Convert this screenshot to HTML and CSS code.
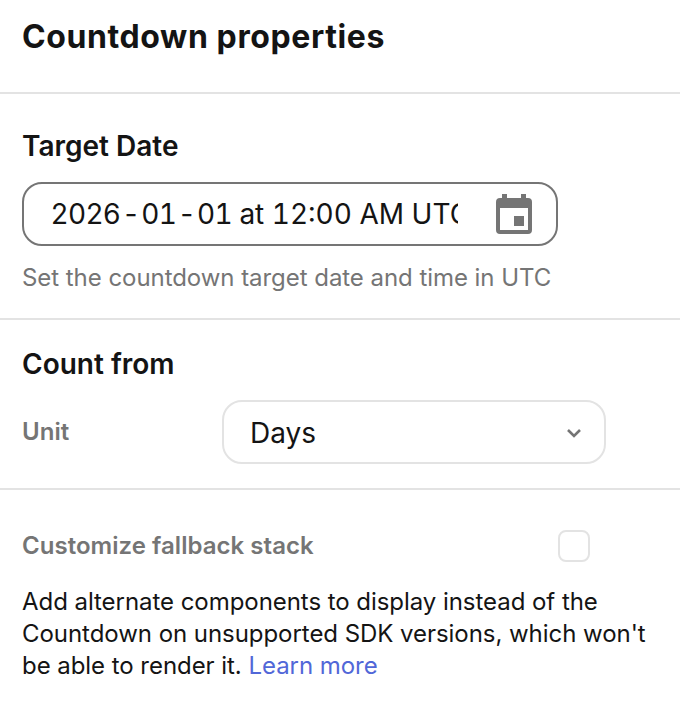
FILE: index.html
```html
<!DOCTYPE html>
<html lang="en">
<head>
<meta charset="utf-8">
<title>Countdown properties</title>
<link rel="stylesheet" href="styles.css">
</head>
<body>
<main class="panel">
  <header class="section header"><h1>Countdown properties</h1></header>
  <section class="section target">
    <h2>Target Date</h2>
    <div class="date-field">
      <span class="date-value"><span class="date-part">2026<span class="hy">-</span>01<span class="hy">-</span>01</span> at 12:00 AM UTC</span>
      <svg class="cal" viewBox="0 0 36 40" aria-hidden="true"><path fill="#757575" fill-rule="evenodd" d="M6 0h5v4h14V0h5v4h2a4 4 0 0 1 4 4v28a4 4 0 0 1-4 4H4a4 4 0 0 1-4-4V8a4 4 0 0 1 4-4h2zM4 14v22h28V14z"/><rect x="18" y="22" width="10" height="10" fill="#757575"/></svg>
    </div>
    <p class="hint">Set the countdown target date and time in UTC</p>
  </section>
  <section class="section count">
    <h2>Count from</h2>
    <div class="unit-row">
      <span class="label">Unit</span>
      <div class="select">
        <span>Days</span>
        <svg class="chev" viewBox="0 0 16 10" aria-hidden="true"><path d="M2 2l6 6 6-6" fill="none" stroke="#757575" stroke-width="2.6"/></svg>
      </div>
    </div>
  </section>
  <section class="section fallback">
    <div class="fallback-row">
      <span class="label">Customize fallback stack</span>
      <span class="checkbox"></span>
    </div>
    <p class="desc">Add alternate components to display instead of the Countdown on unsupported SDK versions, which won't be able to render it. <a href="#">Learn more</a></p>
  </section>
</main>
</body>
</html>
```
FILE: styles.css
```css
* { box-sizing: border-box; }
html, body { margin: 0; background: #fff; }
body { font-family: Inter, "Liberation Sans", sans-serif; color: #141414; }
.panel { width: 680px; height: 708px; overflow: hidden; }
.section { padding: 0 22px; border-bottom: 2px solid #e3e3e3; }
.header { height: 94px; padding-top: 18px; }
h1 { margin: 0; font-size: 32px; line-height: 38px; font-weight: 700; letter-spacing: 0.6px; }
h2 { margin: 0; font-size: 28px; line-height: 36px; font-weight: 600; }
.target { height: 226px; padding-top: 34px; }
.date-field { margin-top: 18px; width: 536px; height: 64px; border: 2px solid #757575; border-radius: 20px; display: flex; align-items: center; justify-content: space-between; padding: 0 24px 0 26.5px; }
.date-value { width: 407.5px; overflow: hidden; white-space: nowrap; font-size: 28px; line-height: 36px; font-variant-numeric: tabular-nums; }
.date-part { letter-spacing: -0.7px; }
.hy { margin: 0 1.7px; }
.cal { width: 36px; height: 40px; }
.hint { margin: 16px 0 0; font-size: 24px; line-height: 32px; letter-spacing: -0.05px; color: #757575; }
.count { height: 170px; padding-top: 26px; }
.unit-row { margin-top: 18px; display: flex; align-items: center; }
.label { font-size: 24px; line-height: 32px; font-weight: 600; letter-spacing: 0.04px; color: #757575; }
.unit-row .label { width: 200px; }
.select { width: 384px; height: 64px; border: 2px solid #e3e3e3; border-radius: 20px; display: flex; align-items: center; justify-content: space-between; padding: 1px 22px 0 26px; font-size: 28px; line-height: 36px; }
.chev { width: 16px; height: 10px; }
.fallback { border-bottom: 0; padding-top: 40px; }
.fallback-row { display: flex; align-items: center; justify-content: space-between; padding-right: 68px; height: 32px; }
.checkbox { width: 32px; height: 32px; border: 2px solid #e3e3e3; border-radius: 8px; }
.desc { margin: 24px 0 0; font-size: 24px; line-height: 32px; letter-spacing: -0.05px; color: #141414; }
.desc a { color: #5167d8; text-decoration: none; }
```
